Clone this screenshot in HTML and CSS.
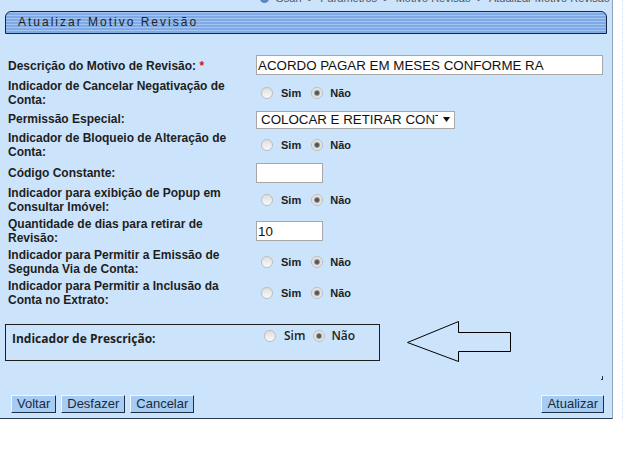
FILE: index.html
```html
<!DOCTYPE html>
<html lang="pt-BR">
<head>
<meta charset="utf-8">
<title>Atualizar Motivo Revisão</title>
<link rel="stylesheet" href="styles.css">
</head>
<body>
<div class="frame">
  <div class="panel">
    <div class="crumbs"><span><span class="crumb-icon"></span>Gsan &nbsp;&gt;&nbsp; Parâmetros &nbsp;&gt;&nbsp; Motivo Revisão &nbsp;&gt;&nbsp; Atualizar Motivo Revisão</span></div>
    <div class="titlebar">Atualizar Motivo Revisão</div>
    <form class="grid">
      <label class="lbl">Descrição do Motivo de Revisão: <span class="req">*</span></label>
      <div class="fld top"><input type="text" class="txt wide" value="ACORDO PAGAR EM MESES CONFORME RA"></div>

      <label class="lbl">Indicador de Cancelar Negativação de Conta:</label>
      <div class="fld radios"><input type="radio" name="r1"><span>Sim</span><input type="radio" name="r1" checked><span>Não</span></div>

      <label class="lbl">Permissão Especial:</label>
      <div class="fld"><div class="selwrap"><select class="sel"><option>COLOCAR E RETIRAR CONTA DE REVISÃO</option></select><svg class="selarrow" width="7" height="5" viewBox="0 0 7 5"><polygon points="0,0 7,0 3.5,5" fill="#111"/></svg></div></div>

      <label class="lbl">Indicador de Bloqueio de Alteração de Conta:</label>
      <div class="fld radios"><input type="radio" name="r2"><span>Sim</span><input type="radio" name="r2" checked><span>Não</span></div>

      <label class="lbl">Código Constante:</label>
      <div class="fld bot"><input type="text" class="txt short" value=""></div>

      <label class="lbl">Indicador para exibição de Popup em Consultar Imóvel:</label>
      <div class="fld radios"><input type="radio" name="r3"><span>Sim</span><input type="radio" name="r3" checked><span>Não</span></div>

      <label class="lbl">Quantidade de dias para retirar de Revisão:</label>
      <div class="fld"><input type="text" class="txt short" value="10"></div>

      <label class="lbl">Indicador para Permitir a Emissão de Segunda Via de Conta:</label>
      <div class="fld radios"><input type="radio" name="r4"><span>Sim</span><input type="radio" name="r4" checked><span>Não</span></div>

      <label class="lbl">Indicador para Permitir a Inclusão da Conta no Extrato:</label>
      <div class="fld radios"><input type="radio" name="r5"><span>Sim</span><input type="radio" name="r5" checked><span>Não</span></div>
    </form>

    <div class="presc-row">
      <div class="presc">
        <div class="presc-lbl">Indicador de Prescrição:</div>
        <div class="radios presc-radios"><input type="radio" name="r6"><span>Sim</span><input type="radio" name="r6" checked><span>Não</span></div>
      </div>
      <svg class="arrow" width="106" height="42" viewBox="0 0 106 42"><polygon points="0.5,21.5 51.5,0.5 51.5,11.5 103.5,11.5 103.5,30.5 51.5,30.5 51.5,40.5" fill="none" stroke="#000" stroke-width="1"/></svg>
    </div>

    <div class="tick-row"><span class="tick"></span></div>

    <div class="buttons">
      <button type="button" class="btn">Voltar</button>
      <button type="button" class="btn">Desfazer</button>
      <button type="button" class="btn">Cancelar</button>
      <button type="button" class="btn push">Atualizar</button>
    </div>
  </div>
</div>
</body>
</html>
```

FILE: styles.css
```css
* { box-sizing: border-box; }
html, body { margin: 0; padding: 0; background: #fff; }
body { font-family: "Liberation Sans", Arial, sans-serif; color: #1e1e1e; }

.frame { width: 623px; border-right: 1px dotted #d3dde8; }

.panel {
  width: 613px;
  background: #cbe4fb;
  border-right: 1px solid #8ea4ba;
  border-bottom: 1px solid #2b3a4a;
  padding-bottom: 5px;
}

.crumbs {
  height: 4px;
  overflow: hidden;
  display: flex;
  align-items: flex-end;
  justify-content: flex-end;
  font-size: 11px;
  line-height: 12px;
  color: #555;
  padding-right: 2px;
  white-space: nowrap;
}
.crumb-icon {
  display: inline-block;
  width: 9px; height: 9px;
  border-radius: 50%;
  background: #5d86c4;
  margin-right: 6px;
  vertical-align: -1px;
}

.titlebar {
  margin: 7px 5px 0 5px;
  height: 23px;
  border: 1px solid #16254a;
  border-radius: 6px 6px 0 0;
  background: repeating-linear-gradient(to bottom, #a4c5ef 0, #a4c5ef 1px, #7faae6 1px, #7faae6 3px);
  font-size: 12px;
  letter-spacing: 2px;
  line-height: 21px;
  padding-left: 12px;
  color: #1f1f1f;
}

.grid {
  display: grid;
  grid-template-columns: 236px 1fr;
  grid-template-rows: 21px 28px 18px 28px 21px 28px 28px 28px 28px;
  column-gap: 12px;
  row-gap: 3px;
  margin: 21px 0 0 8px;
}

.lbl {
  font-weight: bold;
  font-size: 12px;
  line-height: 14px;
  align-self: center;
  color: #1e1e1e;
}
.req { color: #e01010; }

.fld { display: flex; align-items: center; }
.fld.top { align-items: flex-start; }
.fld.bot { align-items: flex-end; }

.txt {
  height: 20px;
  border: 1px solid #a7a7a7;
  background: #fff;
  font: 10pt "Liberation Sans", Arial, sans-serif;
  padding: 0 1px;
  margin: 0;
  color: #111;
  outline: none;
}
.wide { width: 347px; }
.short { width: 67px; }

.selwrap { position: relative; width: 199px; height: 18px; }
.sel {
  -webkit-appearance: none;
  appearance: none;
  width: 199px;
  height: 18px;
  margin: 0;
  border: 1px solid #a7a7a7;
  border-radius: 0;
  background: #fff;
  font: 10pt "Liberation Sans", Arial, sans-serif;
  color: #111;
  padding: 0 16px 0 4px;
  line-height: 16px;
}
.selarrow { position: absolute; left: 187px; top: 7px; }

.radios { display: flex; align-items: center; }
.radios input {
  -webkit-appearance: none;
  appearance: none;
  width: 12px;
  height: 12px;
  margin: 0;
  border: 1px solid #bcbcbc;
  border-radius: 50%;
  background: linear-gradient(#dedede, #fafafa);
  flex: none;
}
.radios input:first-child { margin-left: 5px; }
.radios input:checked {
  background: radial-gradient(circle at center, #4f4f4f 0, #5c5c5c 1.6px, #a0a0a0 2.6px, #e2e2e2 3.6px, #f7f7f7 100%);
}
.radios span {
  font-size: 11px;
  font-weight: bold;
  margin-left: 8px;
  color: #1e1e1e;
}
.radios span + input { margin-left: 10px; }
.radios span:last-child { margin-left: 7px; }

.presc-row {
  display: flex;
  align-items: flex-start;
  margin-top: 14px;
}
.presc {
  margin: 3px 0 0 5px;
  width: 375px;
  height: 37px;
  border: 1px solid #1e1e1e;
  display: flex;
  align-items: flex-start;
  padding-left: 6px;
}
.presc-lbl {
  width: 247px;
  flex: none;
  font-family: "Open Sans", "Liberation Sans", sans-serif;
  font-weight: bold;
  font-size: 12px;
  line-height: 16px;
  padding-top: 6px;
  color: #1e1e1e;
}
.presc-radios { margin-top: 2px; }
.presc-radios span {
  font-family: "Open Sans", "Liberation Sans", sans-serif;
  font-weight: 600;
  font-size: 12px;
}
.presc-radios span + input { margin-left: 8px; }
.presc-radios span:last-child { margin-left: 6px; }
.arrow { margin-left: 27px; flex: none; }

.tick-row {
  display: flex;
  justify-content: flex-end;
  padding-right: 9px;
  margin-top: 13px;
}
.tick {
  width: 2px;
  height: 4px;
  border-right: 1px solid #333;
  border-bottom: 1px solid #333;
}

.buttons {
  display: flex;
  margin-top: 15px;
  padding: 0 8px 0 11px;
}
.btn {
  font: 13px "Liberation Sans", Arial, sans-serif;
  color: #1b2a3c;
  background: #a6ccf3;
  border: 1px solid;
  border-color: #eef6fe #1f2f42 #1f2f42 #eef6fe;
  padding: 0 5px;
  height: 18px;
  line-height: 16px;
  margin: 0 5px 0 0;
  border-radius: 0;
}
.btn.push { margin-left: auto; margin-right: 0; }
```
